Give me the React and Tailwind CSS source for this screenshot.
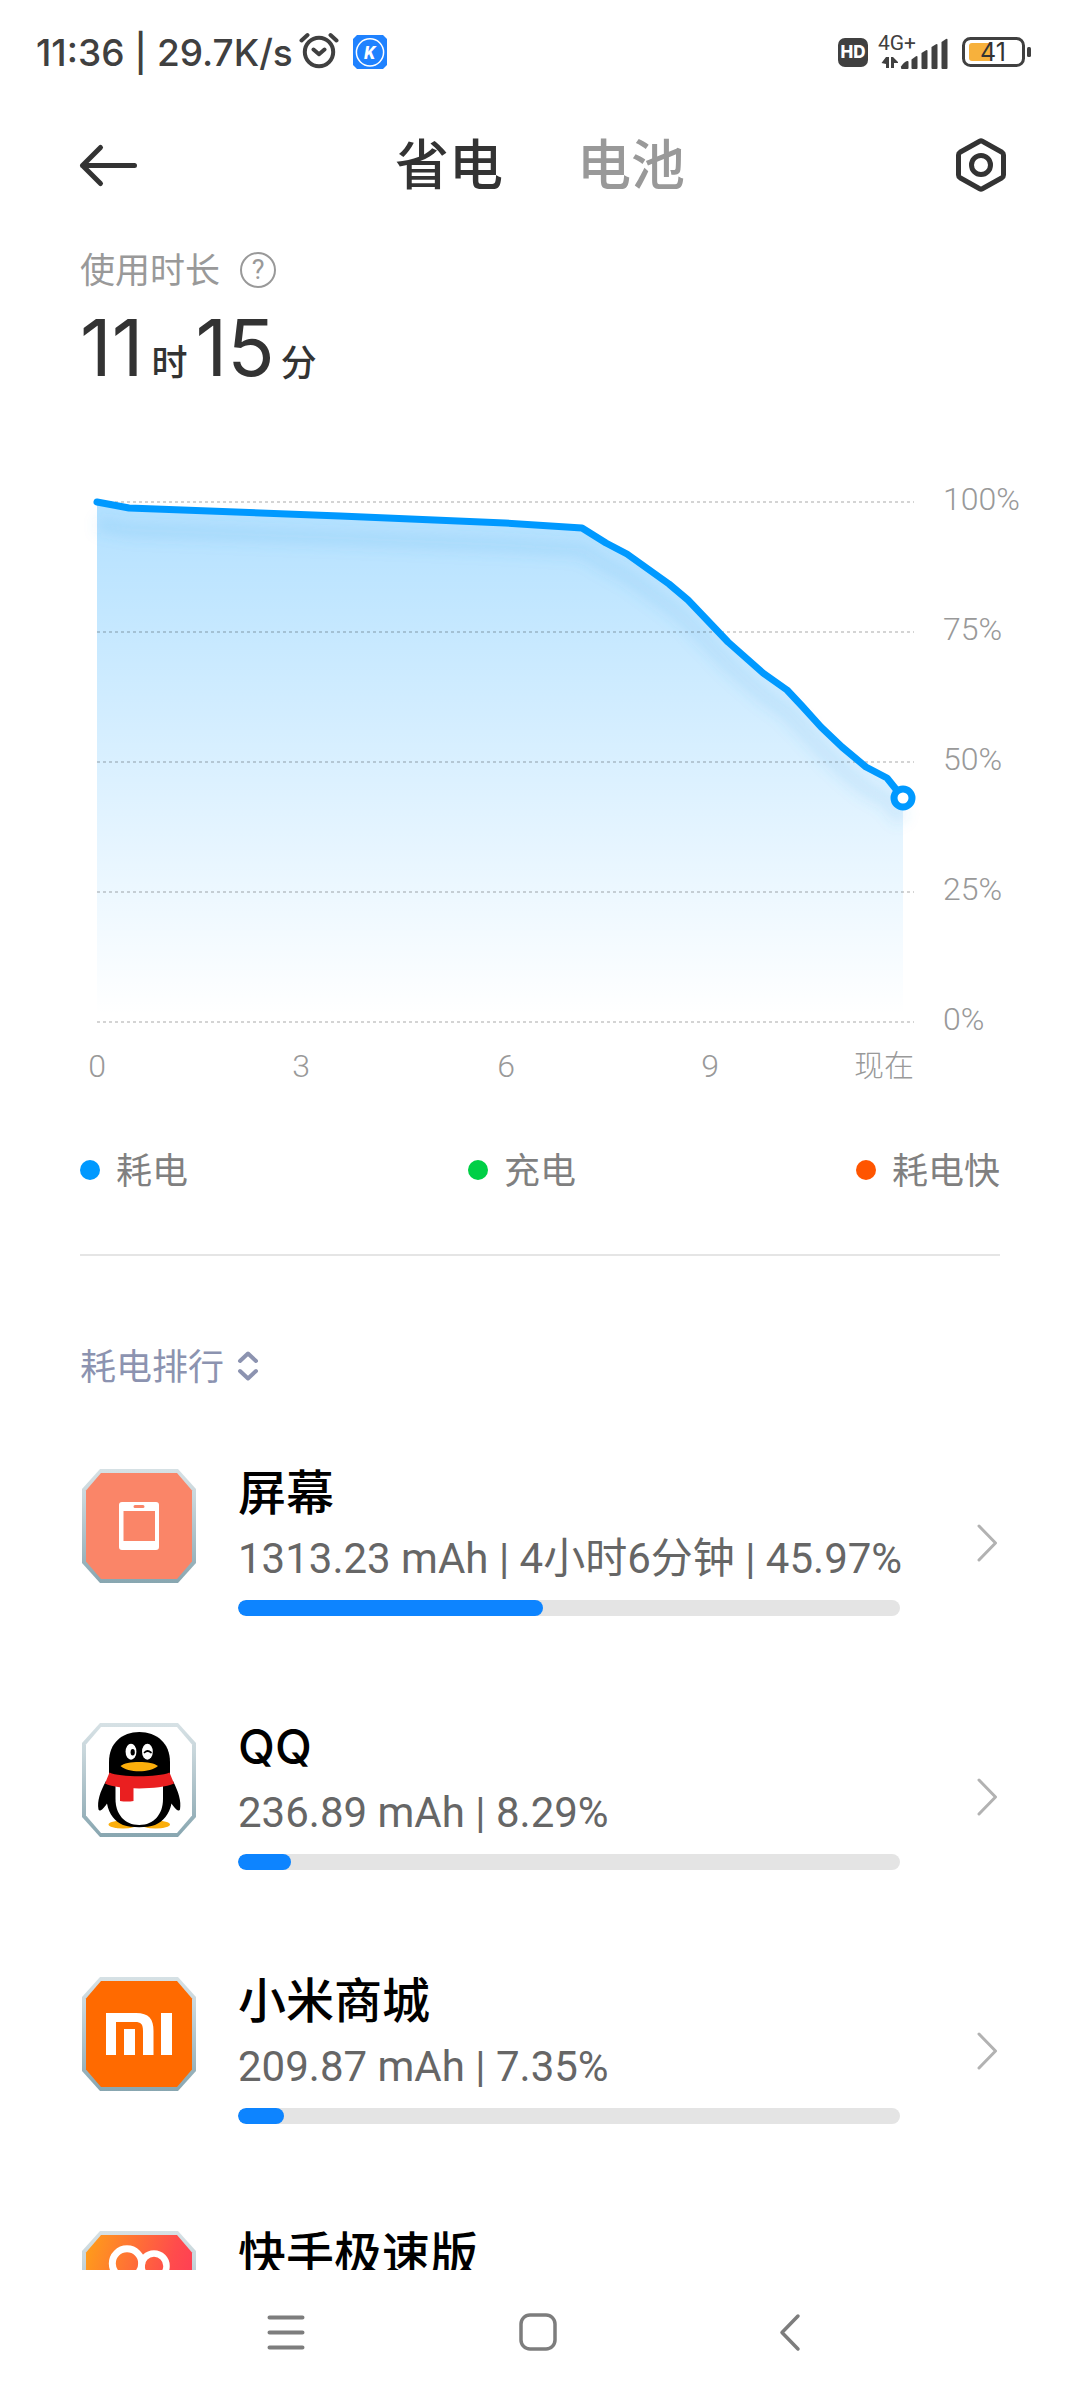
const LINE =
  "97,32 129,38 340,46 505,53 582,58 606,73 627,84 669,114 688,130 728,172 763,203 787,220 802,236 821,257 842,277 866,297 887,308 903,328";

const Y_LABELS = [
  { text: "100%", y: 32 },
  { text: "75%", y: 162 },
  { text: "50%", y: 292 },
  { text: "25%", y: 422 },
  { text: "0%", y: 552 },
];

const X_LABELS = [
  { text: "0", x: 97 },
  { text: "3", x: 301 },
  { text: "6", x: 506 },
  { text: "9", x: 710 },
];

const LEGEND = [
  { label: "耗电", dot: "bg-[#0099ff]" },
  { label: "充电", dot: "bg-[#00cf46]" },
  { label: "耗电快", dot: "bg-[#ff5500]" },
];

function AlarmIcon() {
  return (
    <svg className="h-10 w-10 shrink-0" viewBox="0 0 40 40" fill="none" stroke="#404040" strokeWidth="4" strokeLinecap="round" strokeLinejoin="round" aria-hidden="true">
      <circle cx="20" cy="22" r="14.2" />
      <path d="M14.5 19.5 20 24.2l5.500-4.700M2.500 10.500 8.500 5M37.500 10.500 31.500 5" />
    </svg>
  );
}

function KIcon() {
  return (
    <svg className="h-[34px] w-[34px] shrink-0" viewBox="0 0 34 34" aria-hidden="true">
      <path d="M4 0h26l4 4v26l-4 4H4l-4-4V4z" fill="#1f82ff" />
      <circle cx="17" cy="17.300" r="13.600" fill="none" stroke="#fff" strokeWidth="1.500" />
      <text x="16.500" y="24" textAnchor="middle" fill="#fff" fontSize="18" fontWeight="800" fontStyle="italic" fontFamily="Roboto, sans-serif">K</text>
    </svg>
  );
}

function SignalIcon() {
  return (
    <svg className="h-10 w-[72px] shrink-0" viewBox="0 0 72 40" fill="#404040" aria-hidden="true">
      <text x="0" y="20" fontSize="21" fontFamily="Roboto, sans-serif">4G+</text>
      <path d="M8 27h3v11H8v-4L3.500 33zM13 27h2l5 5v1h-4v5h-3z" />
      <path d="M23 36.500c1.500-2.500 4-5 6-5.500 1-.2 1.500.2 1.500 1v6q0 1-1 1h-5.500q-1.500 0-1-2.500z" />
      <path d="M33.500 29.500 38 26.200q1.500-.7 1.500.8v11q0 1-1 1h-4q-1 0-1-1z" />
      <path d="M43.500 23 48 20.200q1.500-.7 1.500.8v17q0 1-1 1h-4q-1 0-1-1z" />
      <path d="M53.500 17 58 14.200q1.500-.7 1.500.8v23q0 1-1 1h-4q-1 0-1-1z" />
      <path d="M63.500 12 68 9q1.500-.7 1.500.8V38q0 1-1 1h-4q-1 0-1-1z" />
    </svg>
  );
}

function BatteryIcon() {
  return (
    <svg className="h-[30px] w-[70px] shrink-0" viewBox="0 0 70 30" aria-hidden="true">
      <rect x="1.500" y="1.500" width="60" height="27" rx="7" fill="none" stroke="#404040" strokeWidth="3" />
      <path d="M10 6h18v18H10q-3 0-3-3V9q0-3 3-3z" fill="#f7b13c" />
      <rect x="65" y="10" width="4" height="10" rx="1.500" fill="#404040" />
      <text x="31" y="24" textAnchor="middle" fontSize="25" fill="#333" fontFamily="Inter, sans-serif">41</text>
    </svg>
  );
}

function StatusBar() {
  return (
    <div className="flex h-[104px] shrink-0 items-center justify-between pr-12 pl-9 text-[#404040]">
      <div className="flex items-center">
        <span className="font-[Inter,sans-serif] text-[37px] leading-none font-medium">11:36 | 29.7K/s</span>
        <span className="ml-1.5 pb-1"><AlarmIcon /></span>
        <span className="ml-3.5"><KIcon /></span>
      </div>
      <div className="flex items-center">
        <span className="flex h-[29px] w-[30px] items-center justify-center rounded-[7px] bg-[#404040] font-[Inter,sans-serif] text-[17px] leading-none font-extrabold text-white">HD</span>
        <span className="ml-2.5 pb-1"><SignalIcon /></span>
        <span className="ml-3"><BatteryIcon /></span>
      </div>
    </div>
  );
}

function Header() {
  return (
    <header className="grid h-[122px] shrink-0 grid-cols-[1fr_auto_1fr] items-center px-[72px]">
      <button type="button" aria-label="返回" className="justify-self-start">
        <svg className="h-12 w-[68px]" viewBox="0 0 68 48" fill="none" stroke="#333" strokeWidth="5" strokeLinecap="round" strokeLinejoin="round">
          <path d="M28.500 6.500 10.500 24.500l18 18M10.500 24.500h52" />
        </svg>
      </button>
      <nav className="flex gap-[74px] pt-1 text-[54px] leading-[80px] font-medium">
        <a href="#save" aria-current="page" className="text-[#333]">省电</a>
        <a href="#battery" className="text-[#999]">电池</a>
      </nav>
      <button type="button" aria-label="设置" className="justify-self-end">
        <svg className="h-[58px] w-[54px]" viewBox="0 0 54 58" fill="none" stroke="#333" strokeWidth="5" strokeLinejoin="round">
          <path d="M25.700 5.200q1.300-.7 2.600 0L48 16.300q1.500.9 1.500 2.600v20.200q0 1.700-1.500 2.600L28.300 52.800q-1.300.7-2.600 0L6 41.700q-1.500-.9-1.500-2.600V18.900q0-1.700 1.500-2.600z" />
          <circle cx="27" cy="29" r="9.500" />
        </svg>
      </button>
    </header>
  );
}

function BatteryChart() {
  return (
    <svg className="mt-[82px] block w-full" viewBox="0 0 1080 630" role="img" aria-label="电量曲线">
      <defs>
        <linearGradient id="area" x1="0" y1="32" x2="0" y2="545" gradientUnits="userSpaceOnUse">
          <stop offset="0" stopColor="#0099ff" stopOpacity=".3" />
          <stop offset="1" stopColor="#0099ff" stopOpacity="0" />
        </linearGradient>
        <filter id="soft" x="-10%" y="-20%" width="120%" height="150%">
          <feGaussianBlur stdDeviation="7" />
        </filter>
      </defs>
      <polygon points={`${LINE} 903,552 97,552`} fill="url(#area)" />
      <polyline points={LINE} transform="translate(0 22)" fill="none" stroke="#3f9fdd" strokeWidth="16" strokeOpacity=".13" strokeLinejoin="round" filter="url(#soft)" />
      {Y_LABELS.map(({ text, y }) => (
        <g key={text}>
          <path d={`M97 ${y}H914`} stroke="#000" strokeOpacity=".17" strokeWidth="2" strokeDasharray="3 3" />
          <text x="943" y={y + 8} fontSize="32" fontWeight="300" fill="#999">{text}</text>
        </g>
      ))}
      {X_LABELS.map(({ text, x }) => (
        <text key={text} x={x} y="607" textAnchor="middle" fontSize="32" fontWeight="300" fill="#999">{text}</text>
      ))}
      <text x="914" y="606" textAnchor="end" fontSize="30" fontWeight="300" fill="#999">现在</text>
      <polyline points={LINE} fill="none" stroke="#0099ff" strokeWidth="7" strokeLinejoin="round" strokeLinecap="round" />
      <circle cx="903" cy="328" r="9" fill="#fff" stroke="#0099ff" strokeWidth="7" />
    </svg>
  );
}

function AppIcon({ id, children }) {
  return (
    <svg className="h-[114px] w-[114px] shrink-0" viewBox="0 0 114 114" aria-hidden="true">
      <defs>
        <linearGradient id={`frame-${id}`} x1="0" y1="0" x2="0" y2="1">
          <stop offset="0" stopColor="#d6e1e5" />
          <stop offset=".25" stopColor="#c8d6db" />
          <stop offset="1" stopColor="#88a6b0" />
        </linearGradient>
      </defs>
      <path d="M18 0H96L114 20V94L96 114H18L0 94V20Z" fill={`url(#frame-${id})`} />
      {children}
    </svg>
  );
}

const INNER = "M19 4H95L110 21.500V92.500L95 110H19L4 92.500V21.500Z";

function ScreenIcon() {
  return (
    <AppIcon id="screen">
      <path d={INNER} fill="#fa8568" />
      <path fillRule="evenodd" fill="#fff" d="M40 33H74q3 0 3 3V78q0 3-3 3H40q-3 0-3-3V36q0-3 3-3ZM41.500 42V72H73V42ZM53 36q-1.500 0-1.500 1.500T53 39h8q1.500 0 1.500-1.500T61 36Z" />
    </AppIcon>
  );
}

function QQIcon() {
  return (
    <AppIcon id="qq">
      <path d={INNER} fill="#fff" />
      <ellipse cx="41" cy="101.500" rx="14.500" ry="4" fill="#fbae0b" />
      <ellipse cx="73.500" cy="101.500" rx="14.500" ry="4" fill="#fbae0b" />
      <path d="M24 58C18 69 15 78 16.500 86.500c1 3 5-.5 8.500-6 2 11 8 18 16 21.500 9 3 23.500 3 32 0 8-3.500 14.500-11 16.500-21.500 3.500 5.500 7.500 9 8.500 6C99.500 78 96.500 69 91 58Z" fill="#000" />
      <path d="M33.500 60H81V76C81 91 72 102 57.200 102S33.500 91 33.500 76Z" fill="#fff" />
      <path d="M27 51V39C27 20 40 9 57.300 9S88 20 88 39V51C78 56 37 56 27 51Z" fill="#000" />
      <path d="M27.500 49.500C38 54.500 76 54.500 87.500 49.500L92 60.500C77 67 37 67 23 60.500Z" fill="#ea1f20" />
      <path d="M38 62H51.500V78Q45 79 38 78Z" fill="#ea1f20" />
      <ellipse cx="49" cy="28.700" rx="5.400" ry="8" fill="#fff" />
      <ellipse cx="65.400" cy="28.700" rx="5.400" ry="8" fill="#fff" />
      <ellipse cx="50.700" cy="29.300" rx="2.100" ry="3.200" fill="#000" />
      <path d="M62.500 29.500q3-3 6.500 0" fill="none" stroke="#000" strokeWidth="1.700" strokeLinecap="round" />
      <path d="M38.500 43C44 37.500 70 37.500 76 43C68 50 46 50 38.500 43Z" fill="#fbae0b" />
    </AppIcon>
  );
}

function MiIcon() {
  return (
    <AppIcon id="mi">
      <path d={INNER} fill="#ff6a00" />
      <path fill="#fff" d="M24 36H54C67 36 71.500 42 71.500 54V78H61V54C61 47 59 45 53 45H34V78H24ZM42 52H53V78H42ZM79 36H90V78H79Z" />
    </AppIcon>
  );
}

function KuaishouIcon() {
  return (
    <AppIcon id="ks">
      <defs>
        <linearGradient id="ks-fill" x1="0" y1=".2" x2="1" y2=".5">
          <stop offset="0" stopColor="#ff9a1c" />
          <stop offset=".75" stopColor="#ff4c4c" />
          <stop offset="1" stopColor="#ff3d55" />
        </linearGradient>
      </defs>
      <path d={INNER} fill="url(#ks-fill)" />
      <g fill="none" stroke="#fff">
        <circle cx="45" cy="32.500" r="14.700" strokeWidth="7" />
        <circle cx="72" cy="35" r="12.500" strokeWidth="6.500" />
        <rect x="34" y="58" width="46" height="34" rx="9" strokeWidth="7" />
      </g>
    </AppIcon>
  );
}

const APPS = [
  { name: "屏幕", detail: "1313.23 mAh | 4小时6分钟 | 45.97%", percent: 46, Icon: ScreenIcon },
  { name: "QQ", detail: "236.89 mAh | 8.29%", percent: 8, Icon: QQIcon },
  { name: "小米商城", detail: "209.87 mAh | 7.35%", percent: 7, Icon: MiIcon },
  { name: "快手极速版", Icon: KuaishouIcon },
];

function AppRow({ name, detail, percent, Icon }) {
  return (
    <li>
      <a href="#detail" className="flex h-[254px] items-start pr-20 pl-[82px]">
        <Icon />
        <div className="ml-[42px] min-w-0 flex-1">
          <h3 className="font-[Inter,'Noto_Sans_CJK_SC',sans-serif] text-[48px] leading-[48px] font-medium text-black">{name}</h3>
          {detail && (
            <>
              <p className="mt-[17px] text-[42px] leading-[50px] whitespace-nowrap text-[#666]">{detail}</p>
              <div className="mt-4 h-4 overflow-hidden rounded-full bg-[#e4e4e4]">
                <div className="h-full rounded-full bg-[#0d84ff]" style={{ width: `${percent}%` }} />
              </div>
            </>
          )}
        </div>
        <svg className="mt-[54px] ml-[76px] h-10 w-6 shrink-0" viewBox="0 0 24 40" fill="none" stroke="#b2b2b2" strokeWidth="3" strokeLinecap="round" strokeLinejoin="round" aria-hidden="true">
          <path d="M3 3 19.500 20 3 37" />
        </svg>
      </a>
    </li>
  );
}

function SystemNav() {
  return (
    <nav className="grid h-[130px] shrink-0 grid-cols-3 items-center justify-items-center bg-white pr-[164px] pb-1.5 pl-40">
      <button type="button" aria-label="最近任务">
        <svg className="h-10 w-10" viewBox="0 0 40 40" fill="none" stroke="#7d7d7d" strokeWidth="4" strokeLinecap="round">
          <path d="M3.500 5.500h33M3.500 20.500h33M3.500 35.500h33" />
        </svg>
      </button>
      <button type="button" aria-label="主屏幕">
        <svg className="h-10 w-10" viewBox="0 0 40 40" fill="none" stroke="#7d7d7d" strokeWidth="3.500">
          <rect x="3" y="3" width="34" height="34" rx="9" />
        </svg>
      </button>
      <button type="button" aria-label="返回">
        <svg className="h-10 w-10" viewBox="0 0 40 40" fill="none" stroke="#7d7d7d" strokeWidth="3.500" strokeLinecap="round" strokeLinejoin="round">
          <path d="M28 4 12 20.500 28 37" />
        </svg>
      </button>
    </nav>
  );
}

export default function App() {
  return (
    <div className="flex h-screen flex-col overflow-hidden bg-white font-[Roboto,'Noto_Sans_CJK_SC',sans-serif]">
      <StatusBar />
      <Header />
      <main className="min-h-0 flex-1 overflow-hidden">
        <section>
          <div className="flex items-center px-20 pt-6">
            <h2 className="pt-1 text-[35px] leading-9 text-[#999]">使用时长</h2>
            <button type="button" aria-label="使用时长说明" className="ml-5 flex h-9 w-9 items-center justify-center rounded-full border-2 border-[#999] text-[27px] leading-none text-[#999]">?</button>
          </div>
          <p className="mt-[19px] flex h-[79px] items-baseline px-20 font-[Inter,'Noto_Sans_CJK_SC',sans-serif] text-[36px] leading-none font-medium text-[#333]">
            <span className="text-[78px] font-normal">11</span>
            <span className="ml-2">时</span>
            <span className="ml-2 text-[78px] font-normal">15</span>
            <span className="ml-1.5">分</span>
          </p>
          <BatteryChart />
          <ul className="flex items-center justify-between px-20 pt-[50px]">
            {LEGEND.map(({ label, dot }) => (
              <li key={label} className="flex items-center gap-4 text-[#808080]">
                <span className={`h-5 w-5 rounded-full ${dot}`} />
                <span className="pt-1 text-[36px] leading-9">{label}</span>
              </li>
            ))}
          </ul>
        </section>
        <hr className="mx-20 mt-16 border-t-2 border-[#e5e5e5]" />
        <section>
          <button type="button" className="mt-[90px] ml-20 flex items-center gap-3 text-[#8c93b0]">
            <span className="pt-1 text-[36px] leading-9">耗电排行</span>
            <svg className="h-8 w-6" viewBox="0 0 24 32" fill="none" stroke="#8c93b0" strokeWidth="4" strokeLinecap="round" strokeLinejoin="round" aria-hidden="true">
              <path d="M4 11 12 3.500 20 11M4 21 12 28.500 20 21" />
            </svg>
          </button>
          <ul className="mt-[83px]">
            {APPS.map((app) => (
              <AppRow key={app.name} {...app} />
            ))}
          </ul>
        </section>
      </main>
      <SystemNav />
    </div>
  );
}
